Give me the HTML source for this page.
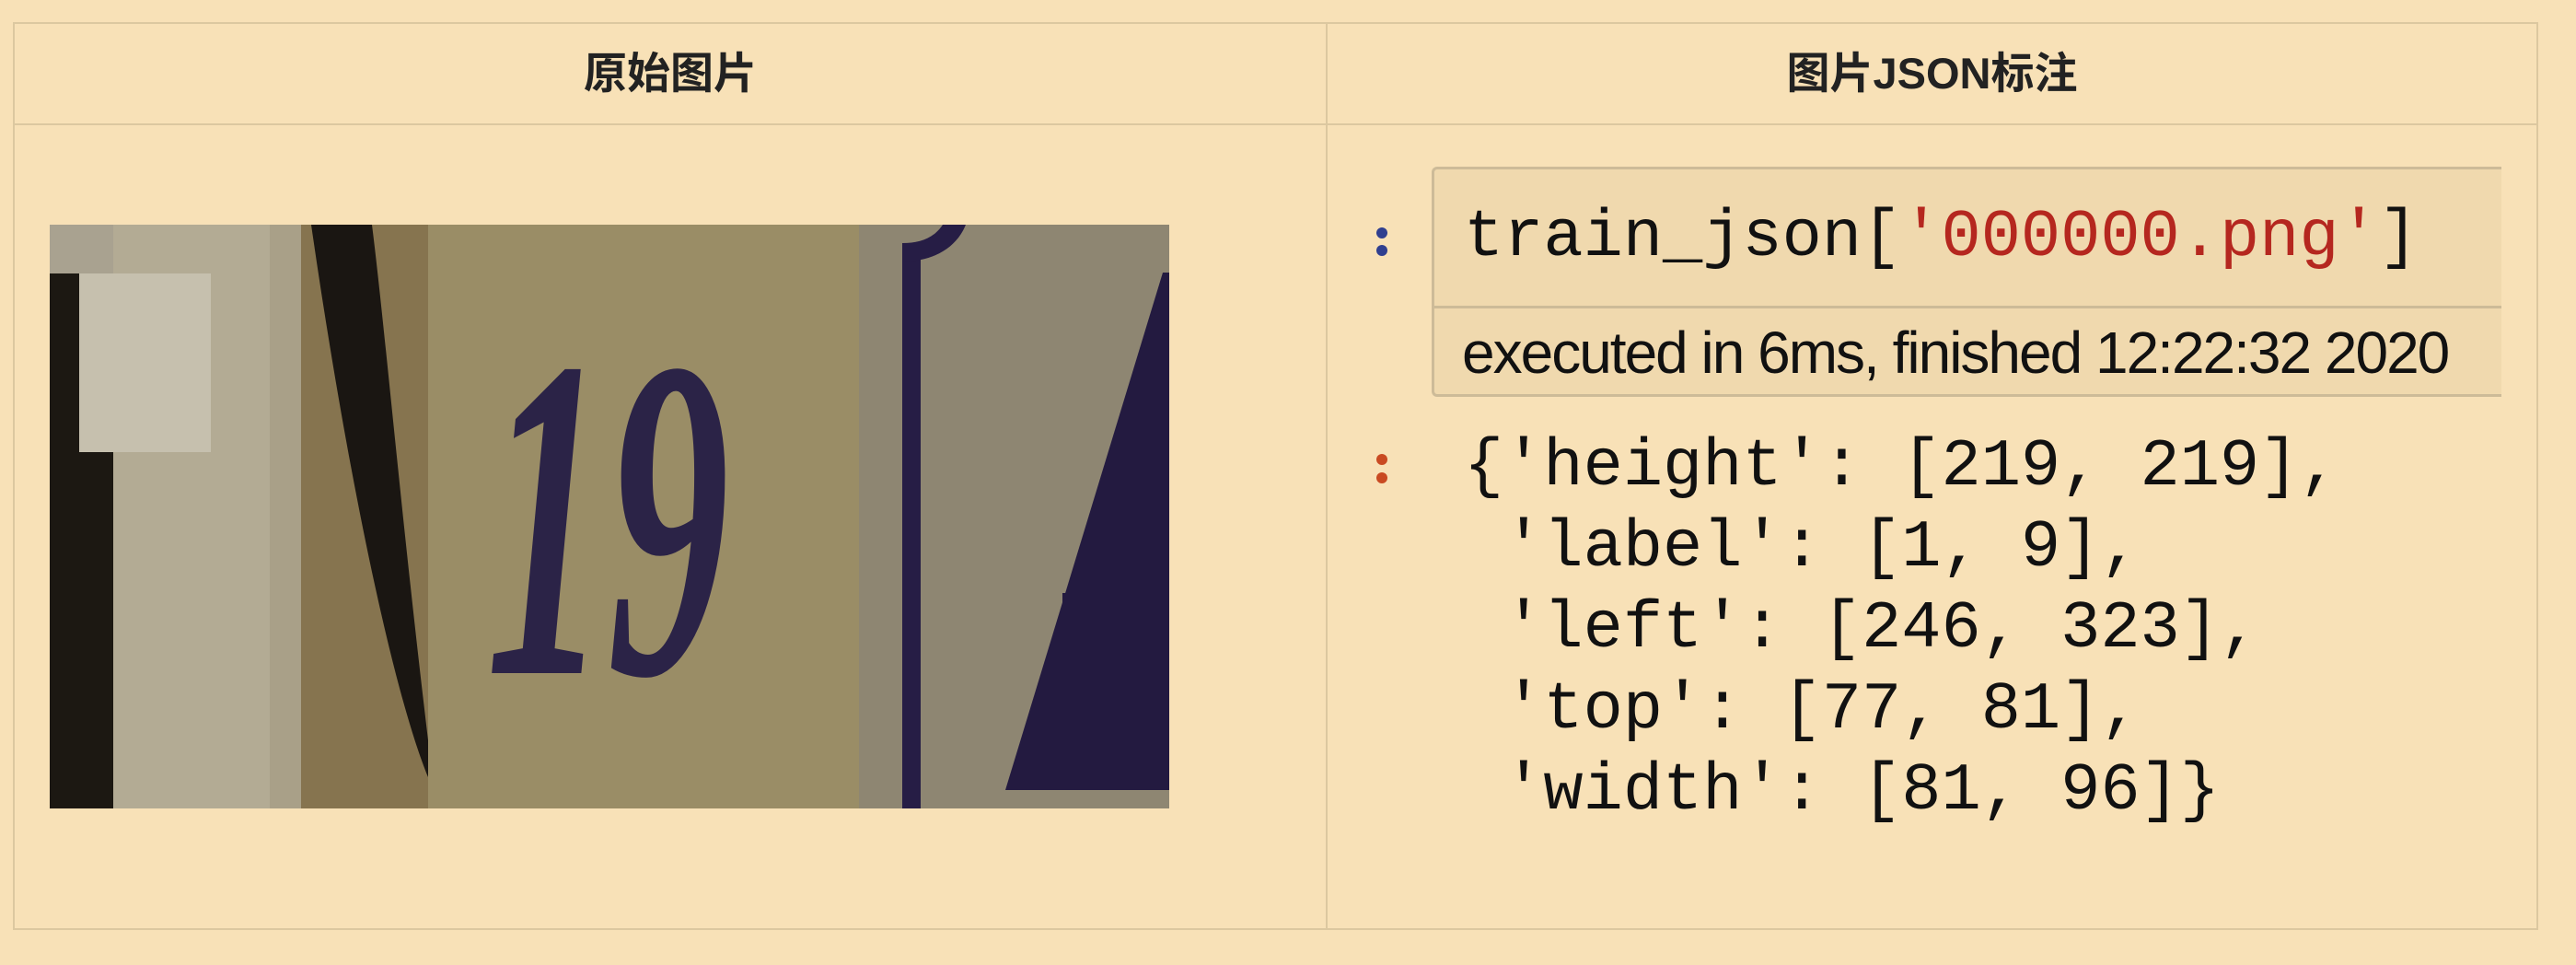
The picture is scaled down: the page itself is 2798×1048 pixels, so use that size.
<!DOCTYPE html>
<html><head><meta charset="utf-8"><style>
html,body{margin:0;padding:0;background:#f8e1b7;width:2798px;height:1048px;overflow:hidden;position:relative}
.abs{position:absolute}
.tbl{left:14px;top:24px;width:2739px;height:982px;border:2px solid #dcc8a0}
.hline{left:16px;top:134px;width:2739px;height:2px;background:#dcc8a0}
.vline{left:1440px;top:26px;width:2px;height:982px;background:#dcc8a0}
.th{top:48px;font:bold 47px "Liberation Sans","Noto Sans CJK SC",sans-serif;color:#222;text-align:center;line-height:64px}
.mono{font-family:"Liberation Mono",monospace;font-size:72px;color:#111;white-space:pre;line-height:88px}
</style></head><body>
<div class="abs tbl"></div>
<div class="abs hline"></div>
<div class="abs vline"></div>
<div class="abs th" style="left:16px;width:1424px">原始图片</div>
<div class="abs th" style="left:1442px;width:1313px">图片JSON标注</div>

<svg class="abs" style="left:54px;top:244px" width="1216" height="634" viewBox="0 0 1216 634">
<rect width="1216" height="634" fill="#978a64"/>
<rect x="0" y="0" width="69" height="634" fill="#a9a290"/>
<rect x="0" y="53" width="69" height="581" fill="#1c1812"/>
<rect x="69" y="0" width="170" height="634" fill="#b3ab94"/>
<rect x="32" y="53" width="143" height="194" fill="#c6c0ae"/>
<rect x="239" y="0" width="34" height="634" fill="#a9a088"/>
<rect x="273" y="0" width="138" height="634" fill="#86744f"/>
<path d="M284 0 L350 0 C365 120 380 300 411 560 L411 600 C370 500 320 250 284 0Z" fill="#1a1612"/>
<rect x="411" y="0" width="468" height="634" fill="#9a8d66"/>
<text x="474" y="487" font-family="Liberation Serif,serif" font-style="italic" font-weight="bold" font-size="500" fill="#2b2347" textLength="264" lengthAdjust="spacingAndGlyphs">19</text>
<rect x="879" y="0" width="337" height="634" fill="#8e8672"/>
<rect x="926" y="20" width="20" height="614" fill="#261d45"/>
<path d="M926 20 L926 40 C960 40 985 25 995 0 L970 0 C960 15 945 20 926 20Z" fill="#261d45"/>
<path d="M1209 52 L1216 52 L1216 614 L1129 614 L1038 614 Z" fill="#231a40"/>
<rect x="1100" y="400" width="116" height="70" fill="#231a40"/>
</svg>

<!-- In prompt -->
<div class="abs" style="left:1495px;top:247px;width:12px;height:12px;border-radius:6px;background:#303f8f"></div>
<div class="abs" style="left:1495px;top:266px;width:12px;height:12px;border-radius:6px;background:#303f8f"></div>
<div class="abs" style="left:1555px;top:181px;width:1159px;height:244px;border:3px solid #cdbb98;border-right:none;border-radius:6px 0 0 6px;background:#f0d9ae;overflow:hidden">
  <div class="abs mono" style="left:32px;top:30px">train_json[<span style="color:#b5271f">'000000.png'</span>]</div>
  <div class="abs" style="left:0;top:148px;width:1200px;height:3px;background:#cdbb98"></div>
  <div class="abs" style="left:30px;top:162px;font:64px 'Liberation Sans',sans-serif;letter-spacing:-2px;color:#111;white-space:nowrap">executed in 6ms, finished 12:22:32 2020</div>
</div>

<!-- Out prompt -->
<div class="abs" style="left:1495px;top:493px;width:12px;height:12px;border-radius:6px;background:#c94a22"></div>
<div class="abs" style="left:1495px;top:513px;width:12px;height:12px;border-radius:6px;background:#c94a22"></div>
<div class="abs mono" style="left:1590px;top:463px">{'height': [219, 219],
 'label': [1, 9],
 'left': [246, 323],
 'top': [77, 81],
 'width': [81, 96]}</div>
</body></html>
